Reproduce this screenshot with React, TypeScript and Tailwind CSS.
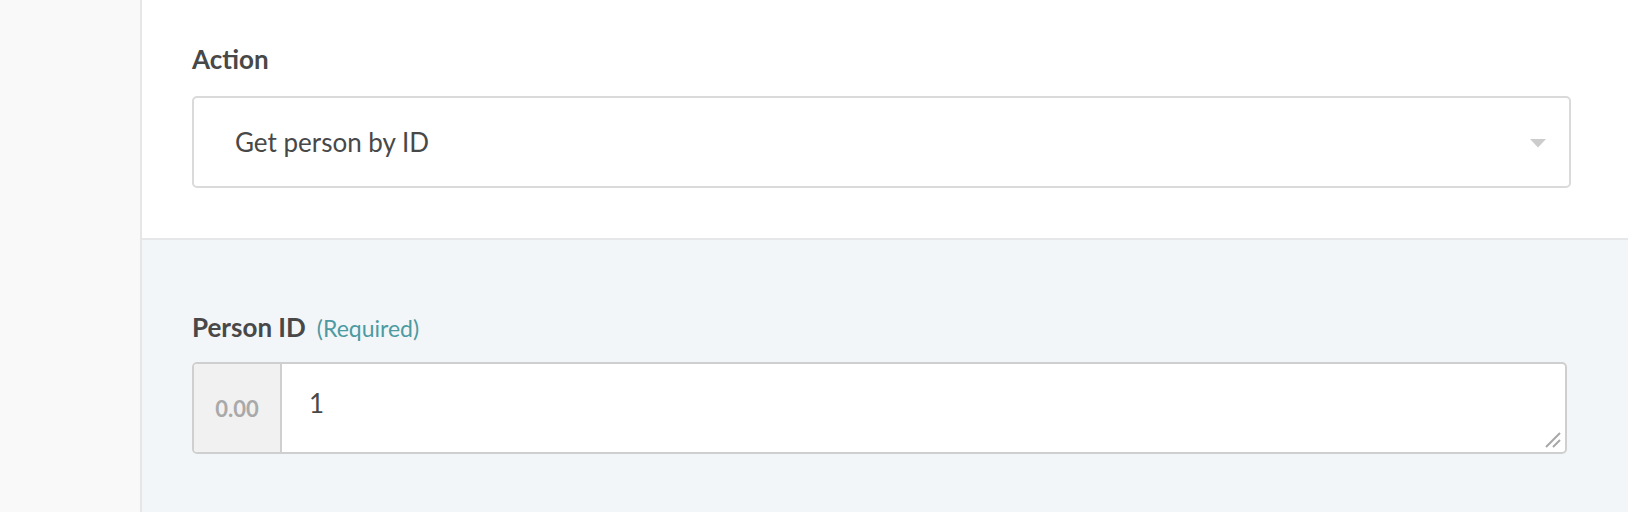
import React from "react";

const font = { fontFamily: "Lato, 'Open Sans', sans-serif" };

const ActionSelect: React.FC = () => (
  <div className="flex h-[92px] items-center justify-between rounded-[5px] border-2 border-[#dadada] bg-white pl-[41px] pr-[23px]">
    <span className="text-[26px] text-[#484848]">Get person by ID</span>
    <svg width="16" height="9" viewBox="0 0 16 9" className="mt-[2px]">
      <path d="M0 0 L16 0 L8 8.5 Z" fill="#cccccc" />
    </svg>
  </div>
);

const PersonIdInput: React.FC = () => (
  <div className="relative flex h-[92px] overflow-hidden rounded-[5px] border-2 border-[#cfcfcf] bg-white">
    <div className="flex w-[88px] items-center justify-center border-r-2 border-[#cfcfcf] bg-[#f1f1f1]">
      <span className="text-[22px] font-bold text-[#a9a9a9]">0.00</span>
    </div>
    <div className="flex-1 pl-[27px] pt-[26px] text-[26px] leading-none text-[#484848]">1</div>
    {/* resize grip */}
    <svg width="18" height="18" viewBox="0 0 18 18" className="absolute bottom-[3px] right-[3px]">
      <path d="M2 16 L16 2 M9 16 L16 9" stroke="#a8a8a8" strokeWidth="2" />
    </svg>
  </div>
);

export default function App() {
  return (
    <div className="flex h-[512px] w-full bg-white" style={font}>
      <aside className="w-[142px] shrink-0 border-r-2 border-[#e6e6e6] bg-[#f9f9f9]" />
      <main className="flex flex-1 flex-col">
        <section className="h-[240px] border-b-2 border-[#e5e7e9] bg-white pl-[50px] pr-[57px] pt-[46px]">
          <label className="block text-[26px] font-bold leading-none text-[#484848]">Action</label>
          <div className="mt-[24px]">
            <ActionSelect />
          </div>
        </section>
        <section className="flex-1 bg-[#f3f6f9] pl-[50px] pr-[61px] pt-[74px]">
          <div className="flex items-baseline gap-[11px] leading-none">
            <span className="text-[26px] font-bold text-[#484848]">Person ID</span>
            <span className="text-[23px] text-[#4c9ba1]">(Required)</span>
          </div>
          <div className="mt-[22px]">
            <PersonIdInput />
          </div>
        </section>
      </main>
    </div>
  );
}
